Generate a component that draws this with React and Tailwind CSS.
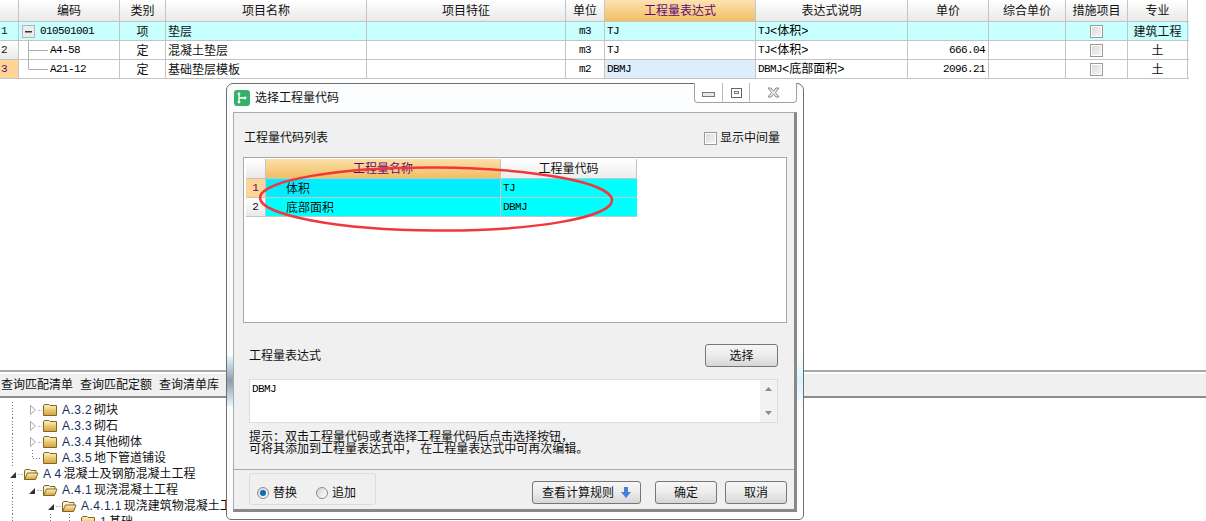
import React from 'react';

const CJK = "font-['Liberation_Sans','Noto_Sans_CJK_SC',sans-serif]";
const MONO = "font-['Liberation_Mono','Noto_Sans_CJK_SC',monospace] text-[11px] tracking-[-0.6px] text-black";

const columns = [
  { key: 'code', title: '编码', width: 'w-[101px]' },
  { key: 'kind', title: '类别', width: 'w-[46px]' },
  { key: 'name', title: '项目名称', width: 'w-[201px]' },
  { key: 'feature', title: '项目特征', width: 'w-[199px]' },
  { key: 'unit', title: '单位', width: 'w-[39px]' },
  { key: 'expr', title: '工程量表达式', width: 'w-[151px]', active: true },
  { key: 'desc', title: '表达式说明', width: 'w-[152px]' },
  { key: 'price', title: '单价', width: 'w-[81px]' },
  { key: 'total', title: '综合单价', width: 'w-[77px]' },
  { key: 'measure', title: '措施项目', width: 'w-[62px]' },
  { key: 'major', title: '专业', width: 'w-[60px]' },
];

const rows = [
  { no: '1', code: '010501001', kind: '项', name: '垫层', unit: 'm3', expr: 'TJ', desc: ['TJ', '<体积>'], price: '', major: '建筑工程', root: true },
  { no: '2', code: 'A4-58', kind: '定', name: '混凝土垫层', unit: 'm3', expr: 'TJ', desc: ['TJ', '<体积>'], price: '666.04', major: '土' },
  { no: '3', code: 'A21-12', kind: '定', name: '基础垫层模板', unit: 'm2', expr: 'DBMJ', desc: ['DBMJ', '<底部面积>'], price: '2096.21', major: '土', current: true, last: true },
];

function Cell({ width, className = '', children }) {
  return (
    <div className={`${width} shrink-0 h-full pt-[1px] flex items-center border-r border-[#c4c4c4] overflow-hidden ${className}`}>
      {children}
    </div>
  );
}

function CheckBox() {
  return <span className="w-[13px] h-[13px] block border border-[#9a9a9a] bg-gradient-to-br from-[#d8d8d8] to-[#f8f8f8] shadow-[inset_0_0_0_1px_#fff]" />;
}

function TreeCode({ row }) {
  if (row.root) {
    return (
      <div className="flex items-center h-full pl-[3px]">
        <svg width="13" height="13" viewBox="0 0 13 13" className="shrink-0">
          <rect x="0.5" y="0.5" width="12" height="12" fill="#ececec" stroke="#b4b4b4" />
          <rect x="3" y="6" width="7" height="1.5" fill="#333" />
        </svg>
        <span className={`${MONO} ml-[5px]`}>{row.code}</span>
      </div>
    );
  }
  return (
    <div className="flex items-center h-full pl-[3px]">
      <svg width="28" height="19" viewBox="0 0 28 19" className="shrink-0">
        <path d={row.last ? 'M6.5 0V9.5H26' : 'M6.5 0V19M6.5 9.5H26'} stroke="#b0b0b0" fill="none" />
      </svg>
      <span className={MONO}>{row.code}</span>
    </div>
  );
}

function MainTable() {
  return (
    <div className={`${CJK} w-[1189px] text-[12px] text-[#111] shrink-0`}>
      <div className="flex h-[22px] border-b border-[#c4c4c4]">
        <div className="w-[19px] shrink-0 border-r border-[#c4c4c4] bg-gradient-to-b from-white to-[#e9e9e9]" />
        {columns.map((col) => (
          <Cell
            key={col.key}
            width={col.width}
            className={`justify-center ${col.active ? 'bg-gradient-to-b from-[#fbe3b0] to-[#f3bd62] text-[#5c0a78]' : 'bg-gradient-to-b from-white to-[#e9e9e9]'}`}
          >
            {col.title}
          </Cell>
        ))}
      </div>
      {rows.map((row) => (
        <div key={row.no} className={`flex h-[19px] border-b border-[#c4c4c4] ${row.root ? 'bg-[#c8ffff]' : 'bg-white'}`}>
          <div className={`w-[19px] shrink-0 border-r border-[#c4c4c4] flex items-center pl-[1px] font-['Liberation_Mono',monospace] text-[11px] ${row.current ? 'bg-[#ffd596] text-[#5c0a78]' : row.root ? '' : 'bg-gradient-to-b from-white to-[#e9e9e9]'}`}>
            {row.no}
          </div>
          <Cell width="w-[101px]"><TreeCode row={row} /></Cell>
          <Cell width="w-[46px]" className="justify-center">{row.kind}</Cell>
          <Cell width="w-[201px]" className="pl-[2px]">{row.name}</Cell>
          <Cell width="w-[199px]" />
          <Cell width="w-[39px]" className={`justify-center ${MONO}`}>{row.unit}</Cell>
          <Cell width="w-[151px]" className={`pl-[2px] ${MONO} ${row.current ? 'bg-[#deedfb]' : ''}`}>{row.expr}</Cell>
          <Cell width="w-[152px]" className={`pl-[2px] ${MONO}`}>
            {row.desc[0]}<span className="text-[12px] tracking-normal">{row.desc[1]}</span>
          </Cell>
          <Cell width="w-[81px]" className={`justify-end pr-[3px] ${MONO}`}>{row.price}</Cell>
          <Cell width="w-[77px]" />
          <Cell width="w-[62px]" className="justify-center"><CheckBox /></Cell>
          <Cell width="w-[60px]" className="justify-center">{row.major}</Cell>
        </div>
      ))}
    </div>
  );
}

function Folder({ open }) {
  return (
    <svg width="16" height="14" viewBox="0 0 16 14" className="shrink-0">
      <defs>
        <linearGradient id="fold" x1="0" y1="0" x2="0" y2="1">
          <stop offset="0" stopColor="#fff3c4" />
          <stop offset="1" stopColor="#d9a02c" />
        </linearGradient>
      </defs>
      {open ? (
        <>
          <path d="M1.5 12.5V3.5L3 2.5H7L8 3.5H13V6" fill="#fbf0c8" stroke="#7c6630" />
          <path d="M1.5 12.5L4.5 6H15L12.5 12.5Z" fill="url(#fold)" stroke="#7c6630" />
        </>
      ) : (
        <path d="M1.5 12.5V2.5L3 1.5H7L8 2.5H14.5V12.5Z" fill="url(#fold)" stroke="#7c6630" />
      )}
    </svg>
  );
}

// w = width before the folder, tip = x of the expander, guides = dotted verticals
function TreeRow({ w, tip, state, guides, label, title, open, branch }) {
  return (
    <div className="flex items-center h-[16px]">
      <svg width={w} height="16" viewBox={`0 0 ${w} 16`} className="shrink-0">
        {guides.map((x) => (
          <path key={x} d={`M${x + 0.5} 0V16`} stroke="#777" strokeDasharray="1 2" />
        ))}
        {state === 'closed' && <path d={`M${tip}.5 3.5L${tip + 5}.5 8L${tip}.5 12.5Z`} fill="#fff" stroke="#a8a8a8" />}
        {state === 'open' && <path d={`M${tip} 12H${tip + 6}V6Z`} fill="#333" />}
        {branch && <path d={`M${tip + 2}.5 0V8.5H${w}`} stroke="#777" strokeDasharray="1 2" fill="none" />}
        {!branch && <path d={`M${tip + 8}.5 8.5H${w}`} stroke="#777" strokeDasharray="1 2" />}
      </svg>
      <Folder open={open} />
      <span className="ml-[4px] text-[12px] text-[#111] whitespace-nowrap flex gap-[2px]">
        <span className="tracking-[0.4px] text-[#14305c]">{label}</span>
        <span>{title}</span>
      </span>
    </div>
  );
}

function BottomPanel() {
  return (
    <div className={`${CJK} h-[151px] shrink-0 mt-auto overflow-hidden`}>
      <div className="h-[28px] bg-[#f0f0f0] border-t-2 border-b-2 border-t-[#a8a8a8] border-b-[#8c8c8c] shadow-[inset_0_2px_0_#fff] flex items-center gap-[7px] pl-[1px] pt-[2px] text-[12px] text-[#111] whitespace-nowrap">
        <span>查询匹配清单</span>
        <span>查询匹配定额</span>
        <span>查询清单库</span>
      </div>
      <div className="pt-[4px]">
        <TreeRow w={42} tip={30} state="closed" guides={[12]} label="A.3.2" title="砌块" />
        <TreeRow w={42} tip={30} state="closed" guides={[12]} label="A.3.3" title="砌石" />
        <TreeRow w={42} tip={30} state="closed" guides={[12]} label="A.3.4" title="其他砌体" />
        <TreeRow w={42} tip={30} branch guides={[12]} label="A.3.5" title="地下管道铺设" />
        <TreeRow w={23} tip={10} state="open" guides={[]} open label="A 4" title="混凝土及钢筋混凝土工程" />
        <TreeRow w={42} tip={29} state="open" guides={[12]} open label="A.4.1" title="现浇混凝土工程" />
        <TreeRow w={61} tip={48} state="open" guides={[12]} open label="A.4.1.1" title="现浇建筑物混凝土工程" />
        <TreeRow w={80} tip={67} branch guides={[12, 50]} label="1" title="基础" />
      </div>
    </div>
  );
}

function WinButton({ children, className = 'w-[62px]' }) {
  return (
    <button className={`${className} h-[23px] shrink-0 rounded-[3px] border border-[#777] bg-gradient-to-b from-[#f6f6f6] via-[#ececec] to-[#d6d6d6] text-[12px] text-[#111] flex items-center justify-center`}>
      {children}
    </button>
  );
}

function Radio({ checked, label }) {
  return (
    <label className="flex items-center gap-[4px]">
      <span className="w-[12px] h-[12px] rounded-full border border-[#8c8c8c] bg-gradient-to-br from-[#d4d4d4] to-white flex items-center justify-center">
        {checked && <span className="w-[6px] h-[6px] rounded-full bg-[#0f6cb0]" />}
      </span>
      <span>{label}</span>
    </label>
  );
}

function CodeGrid() {
  return (
    <div className="relative ml-[9px] mr-[7px] mt-[9px] h-[166px] border border-[#a8a8a8] bg-white pl-[2px] pt-[1px] shrink-0">
      <div className="w-fit">
        <div className="flex h-[20px] border-b border-[#c4c4c4]">
          <div className="w-[20px] border-r border-[#c4c4c4] bg-gradient-to-b from-white to-[#e9e9e9]" />
          <div className="w-[235px] border-r border-[#c4c4c4] bg-gradient-to-b from-[#fbe0a8] to-[#f3bd62] text-[#5c0a78] flex items-center justify-center">工程量名称</div>
          <div className="w-[136px] border-r border-[#c4c4c4] bg-gradient-to-b from-white to-[#ececec] flex items-center justify-center">工程量代码</div>
        </div>
        <div className="flex h-[19px] border-b border-[#c4c4c4]">
          <div className="w-[20px] border-r border-[#c4c4c4] bg-[#ffd596] text-[#5c0a78] flex items-center justify-center font-['Liberation_Mono',monospace] text-[11px]">1</div>
          <div className="w-[235px] border-r border-[#c4c4c4] bg-[#00eeff] flex items-center pl-[20px] pt-[1px]">体积</div>
          <div className={`w-[136px] bg-[#00ffff] flex items-center pl-[2px] ${MONO}`}>TJ</div>
        </div>
        <div className="flex h-[19px] border-b border-[#c4c4c4]">
          <div className="w-[20px] border-r border-[#c4c4c4] bg-gradient-to-b from-white to-[#e9e9e9] flex items-center justify-center font-['Liberation_Mono',monospace] text-[11px]">2</div>
          <div className="w-[235px] border-r border-[#c4c4c4] bg-[#00ffff] flex items-center pl-[20px] pt-[1px]">底部面积</div>
          <div className={`w-[136px] bg-[#00ffff] flex items-center pl-[2px] ${MONO}`}>DBMJ</div>
        </div>
      </div>
      <svg width="360" height="72" viewBox="0 0 360 72" className="absolute left-[15px] top-[5px] pointer-events-none">
        <ellipse cx="177" cy="36" rx="176" ry="31.5" fill="none" stroke="#f0383c" strokeWidth="2.5" transform="rotate(0.4 177 36)" />
      </svg>
    </div>
  );
}

function Dialog() {
  return (
    <div className={`${CJK} absolute left-[226px] top-[83px] w-[578px] h-[437px] rounded-t-[7px] rounded-b-[5px] border border-[#6e6e6e] bg-[#fbfdfe] flex flex-col text-[12px] text-[#111]`}>
      {/* glass glow of the window frame where it crosses the bar behind */}
      <span className="absolute left-0 top-[272px] w-[6px] h-[50px] bg-gradient-to-b from-[#e6f8ff] via-[#8f9db0] to-[#e6f8ff]" />
      <span className="absolute right-0 top-[272px] w-[6px] h-[50px] bg-gradient-to-b from-[#fbfdfe] via-[#d4f6ff] to-[#fbfdfe]" />
      <div className="h-[28px] shrink-0 flex items-center pl-[7px] relative">
        <svg width="16" height="16" viewBox="0 0 16 16">
          <rect width="16" height="16" rx="3" fill="#35b06a" />
          <path d="M5 4V12M5 8H11" stroke="#fff" strokeWidth="1.3" fill="none" />
          <circle cx="5" cy="4" r="1.4" fill="#fff" />
          <circle cx="5" cy="12" r="1.4" fill="#fff" />
          <circle cx="11" cy="8" r="1.4" fill="#fff" />
        </svg>
        <span className="ml-[5px]">选择工程量代码</span>
        <div className="absolute right-[6px] top-[-1px] w-[103px] h-[20px] flex border border-t-0 border-[#a0a0a0] rounded-b-[4px] bg-white">
          <div className="w-[28px] border-r border-[#bbb] flex items-center justify-center">
            <span className="block w-[13px] h-[5px] mt-[4px] border border-[#777] bg-[#e8e8e8]" />
          </div>
          <div className="w-[27px] border-r border-[#bbb] flex items-center justify-center">
            <span className="w-[11px] h-[10px] border border-[#666] flex items-center justify-center">
              <span className="block w-[5px] h-[3px] border border-[#777]" />
            </span>
          </div>
          <div className="flex-1 flex items-center justify-center">
            <svg width="13" height="11" viewBox="0 0 13 11">
              <path d="M1 1H4L6.5 4L9 1H12L8.5 5.5L12 10H9L6.5 7L4 10H1L4.5 5.5Z" fill="#e8e8e8" stroke="#8a8a8a" />
            </svg>
          </div>
        </div>
      </div>
      <div className="relative ml-[6px] w-[564px] h-[400px] shrink-0 bg-[#f0f0f0] border border-[#aaa] border-r-[3px] border-b-[3px] border-r-[#888] border-b-[#888] flex flex-col">
        <div className="mt-[15px] h-[20px] shrink-0 flex items-center justify-between pl-[10px] pr-[14px]">
          <span>工程量代码列表</span>
          <label className="flex items-center gap-[3px]">
            <CheckBox />
            <span>显示中间量</span>
          </label>
        </div>
        <CodeGrid />
        <div className="mt-[21px] h-[23px] shrink-0 flex items-center justify-between pl-[15px] pr-[16px]">
          <span>工程量表达式</span>
          <WinButton className="w-[73px]">选择</WinButton>
        </div>
        <div className="mt-[12px] ml-[15px] mr-[16px] h-[44px] shrink-0 bg-white border border-[#dcdcdc] flex justify-between">
          <span className={`${MONO} pl-[2px] pt-[1px]`}>DBMJ</span>
          <div className="w-[17px] bg-[#f2f2f2] flex flex-col items-center justify-between py-[7px]">
            <svg width="7" height="4" viewBox="0 0 7 4"><path d="M0 4L3.5 0L7 4Z" fill="#8a8a8a" /></svg>
            <svg width="7" height="4" viewBox="0 0 7 4"><path d="M0 0L3.5 4L7 0Z" fill="#8a8a8a" /></svg>
          </div>
        </div>
        <div className="mt-[8px] pl-[15px] leading-[12px] whitespace-nowrap">
          <p>提示：双击工程量代码或者选择工程量代码后点击选择按钮，</p>
          <p>可将其添加到工程量表达式中， 在工程量表达式中可再次编辑。</p>
        </div>
        <div className="mt-auto h-[40px] shrink-0 border-t border-[#aaa] flex items-start pl-[15px] pr-[7px]">
          <div className="mt-[3px] w-[127px] h-[32px] rounded-[3px] border border-[#dcdcdc] flex items-center gap-[19px] pl-[7px] pt-[7px]">
            <Radio checked label="替换" />
            <Radio label="追加" />
          </div>
          <div className="ml-auto mt-[11px] flex gap-[8px]">
            <WinButton className="w-[109px] mr-[6px]">
              查看计算规则
              <svg width="10" height="11" viewBox="0 0 10 11" className="ml-[7px]">
                <path d="M3 0H7V5H10L5 11L0 5H3Z" fill="#4a7fd8" />
              </svg>
            </WinButton>
            <WinButton>确定</WinButton>
            <WinButton>取消</WinButton>
          </div>
        </div>
      </div>
    </div>
  );
}

export default function App() {
  return (
    <div className="relative w-[1206px] h-[521px] bg-white overflow-hidden flex flex-col">
      <MainTable />
      <BottomPanel />
      <Dialog />
    </div>
  );
}
